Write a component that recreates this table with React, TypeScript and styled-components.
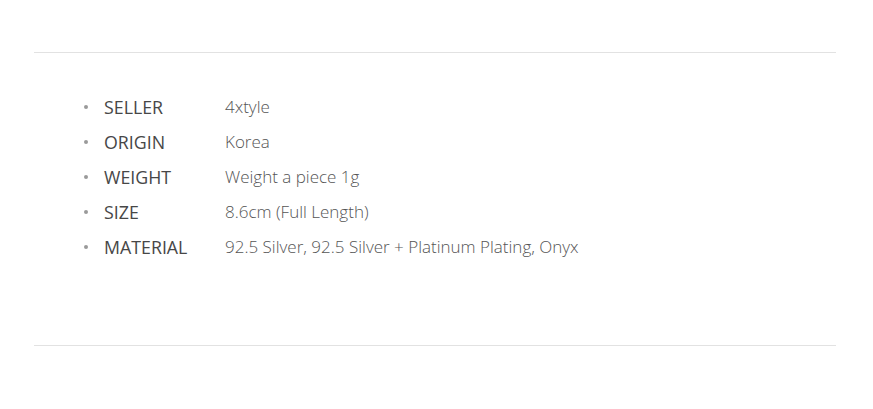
import React from 'react'
import styled, { createGlobalStyle } from 'styled-components'

const GlobalStyle = createGlobalStyle`
body {
    margin: 0;
    background: #fff;
    font-family: "Open Sans", "Liberation Sans", sans-serif;
}
`

const Container = styled.div`
    padding: 52px 37px 0 34px;
`
const Divider = styled.hr`
    margin: 0;
    border: none;
    border-top: 1px solid #e2e2e2;
`
const List = styled.ul`
    list-style: none;
    margin: 0;
    padding: 36px 0 81px 49px;
`
const Row = styled.li`
    display: flex;
    align-items: center;
    height: 35px;
`
const Bullet = styled.span`
    width: 4px;
    height: 4px;
    border-radius: 50%;
    background-color: #9a9a9a;
    margin: 0 16px 0 1px;
    flex-shrink: 0;
`
const Label = styled.span`
    width: 121px;
    font-size: 17.8px;
    color: #474747;
    font-weight: 400;
`
const Value = styled.span`
    font-size: 17px;
    color: #555;
    font-weight: 300;
`

const specs = [
    ['SELLER', '4xtyle'],
    ['ORIGIN', 'Korea'],
    ['WEIGHT', 'Weight a piece 1g'],
    ['SIZE', '8.6cm (Full Length)'],
    ['MATERIAL', '92.5 Silver, 92.5 Silver + Platinum Plating, Onyx'],
]

const App = () => {
    return (
        <Container>
            <GlobalStyle />
            <Divider />
            <List>
                {specs.map(([label, value]) => (
                    <Row key={label}>
                        <Bullet />
                        <Label>{label}</Label>
                        <Value>{value}</Value>
                    </Row>
                ))}
            </List>
            <Divider />
        </Container>
    )
}

export default App
